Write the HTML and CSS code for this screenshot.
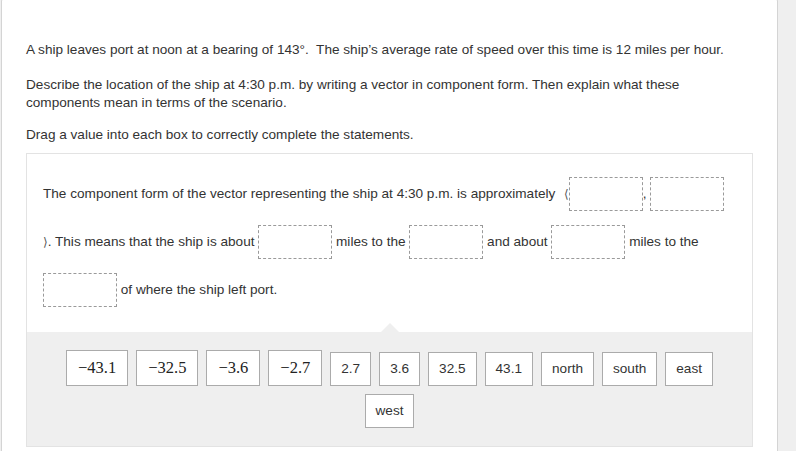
FILE: index.html
```html
<!DOCTYPE html>
<html lang="en">
<head>
<meta charset="utf-8">
<title>Vector drag and drop</title>
<link rel="stylesheet" href="styles.css">
</head>
<body>
<div class="card">
  <p class="p1">A ship leaves port at noon at a bearing of 143°.&nbsp; The ship’s average rate of speed over this time is 12 miles per hour.</p>
  <p class="p2">Describe the location of the ship at 4:30 p.m. by writing a vector in component form. Then explain what these components mean in terms of the scenario.</p>
  <p class="p3">Drag a value into each box to correctly complete the statements.</p>
  <div class="dnd">
    <div class="stmt">
      <div class="line">The component form of the vector representing the ship at 4:30 p.m. is approximately <span class="ang">⟨</span><span class="drop"></span>, <span class="drop"></span></div>
      <div class="line"><span class="ang">⟩</span>. This means that the ship is about <span class="drop"></span> miles to the <span class="drop"></span> and about <span class="drop"></span> miles to the</div>
      <div class="line"><span class="drop"></span> of where the ship left port.</div>
    </div>
    <div class="tray">
      <span class="chip math">−43.1</span>
      <span class="chip math">−32.5</span>
      <span class="chip math">−3.6</span>
      <span class="chip math">−2.7</span>
      <span class="chip">2.7</span>
      <span class="chip">3.6</span>
      <span class="chip">32.5</span>
      <span class="chip">43.1</span>
      <span class="chip">north</span>
      <span class="chip">south</span>
      <span class="chip">east</span>
      <span class="chip">west</span>
    </div>
  </div>
</div>
</body>
</html>
```

FILE: styles.css
```css
html, body {
  margin: 0;
  height: 100%;
  overflow: hidden;
}
body {
  background: #efefef;
  font-family: "Liberation Sans", Arial, sans-serif;
  font-size: 13.6px;
  color: #333;
}
.card {
  box-sizing: border-box;
  width: 777px;
  margin: -3px 0 0 1px;
  padding: 43px 24px 40px;
  background: #fff;
  border: 1px solid #d4d4d4;
  border-radius: 4px;
}
.card p {
  margin: 0;
  line-height: 18px;
}
.p1 { margin-bottom: 17px !important; }
.p2 { margin-bottom: 14px !important; }
.p3 { margin-bottom: 9px !important; }
.dnd {
  border: 1px solid #e3e3e3;
}
.stmt {
  padding: 16px 16px 18px;
}
.line {
  line-height: 48px;
  height: 48px;
  white-space: nowrap;
}
.ang {
  font-family: "DejaVu Sans", sans-serif;
  font-size: 12px;
  color: #555;
}
.line:first-child .ang {
  margin-left: 5px;
}
.drop {
  display: inline-block;
  box-sizing: border-box;
  width: 74px;
  height: 34px;
  border: 1px dashed #9a9a9a;
  background: #fff;
  vertical-align: middle;
}
.tray {
  position: relative;
  background: #efefef;
  display: flex;
  flex-wrap: wrap;
  justify-content: center;
  align-items: flex-end;
  gap: 8px;
  padding: 18px 30px 18px;
}
.tray::before {
  content: "";
  position: absolute;
  top: -9px;
  left: 50%;
  margin-left: -9px;
  border-left: 9px solid transparent;
  border-right: 9px solid transparent;
  border-bottom: 9px solid #efefef;
}
.chip {
  box-sizing: border-box;
  height: 34px;
  line-height: 32px;
  padding: 0 10px;
  background: #fff;
  border: 1px solid #ababab;
  color: #333;
}
.chip.math {
  height: 36px;
  line-height: 34px;
  padding: 0 11px;
  font-family: "Liberation Serif", "Times New Roman", serif;
  font-size: 16.5px;
  color: #222;
}
```
